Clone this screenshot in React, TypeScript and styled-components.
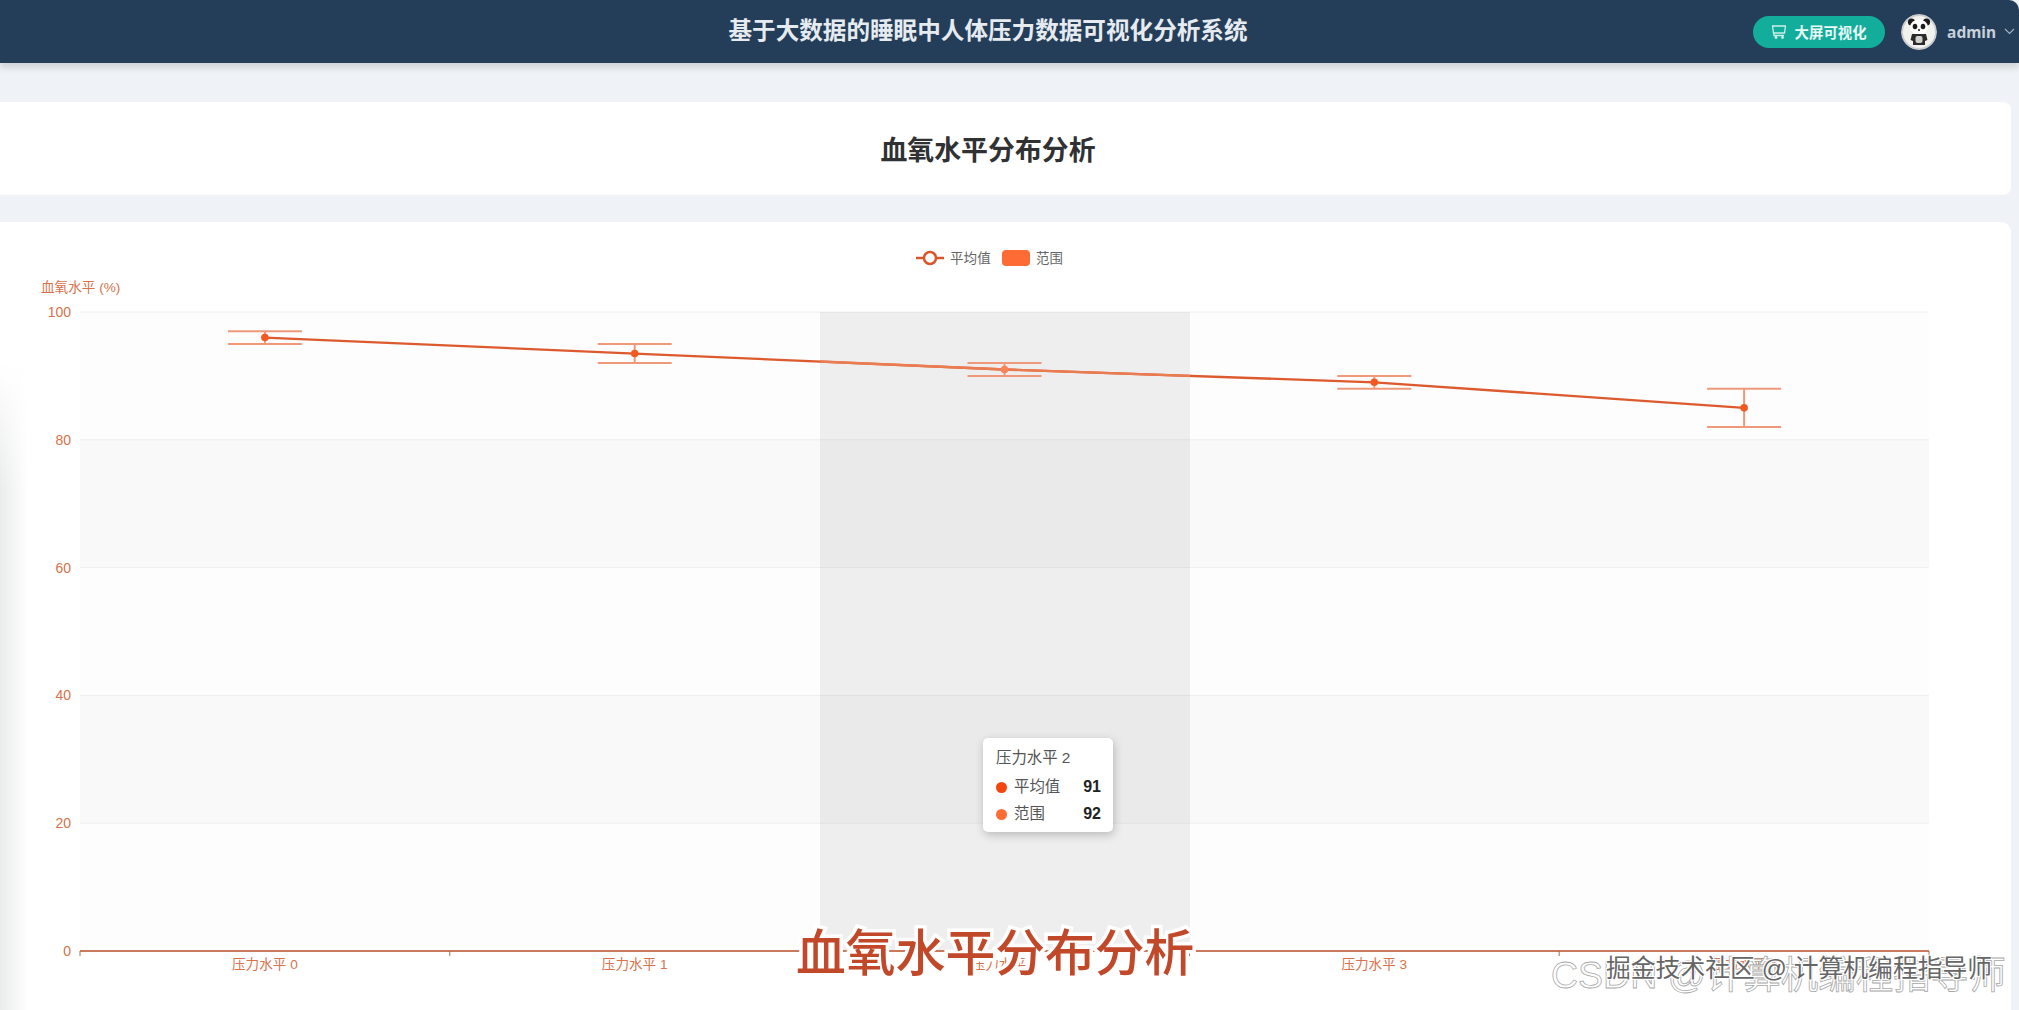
import React from "react";
import styled, { createGlobalStyle } from "styled-components";

const Global = createGlobalStyle`
  html, body { margin: 0; padding: 0; height: 100%; background: #eff2f6; overflow: hidden; }
  #root { height: 100%; }
`;

const CJK = `"Liberation Sans", "Noto Sans CJK SC", sans-serif`;

const Page = styled.div`
  width: 2019px; height: 1010px; display: flex; flex-direction: column;
  font-family: ${CJK}; background: #eff2f6; position: relative; overflow: hidden;
`;
const TopBar = styled.header`
  height: 63px; flex: none; background: #243e5a; border-top-right-radius: 10px;
  display: grid; grid-template-columns: 1fr auto; align-items: center;
  box-shadow: 0 5px 6px rgba(0, 0, 0, 0.12); position: relative; z-index: 2;
`;
const SystemTitle = styled.h1`
  margin: 0 0 0 476px; width: 1024px; text-align: center; font-size: 23.6px; line-height: 63px;
  font-weight: 700; color: #e6ebf0; white-space: nowrap;
`;
const TopActions = styled.div`
  display: flex; align-items: center; padding-right: 4px;
`;
const ScreenButton = styled.button`
  width: 132px; height: 32px; border: 0; border-radius: 16px; background: #12ad9b; color: #eafaf7;
  display: flex; align-items: center; justify-content: center; gap: 9px; padding: 0;
  font: 700 14.4px ${CJK};
`;
const AvatarRing = styled.div`
  width: 36px; height: 36px; margin-left: 16px; border-radius: 50%; overflow: hidden; flex: none;
`;
const UserName = styled.span`
  margin-left: 10px; font-size: 15.5px; font-weight: 700; color: #c6d1dc; font-family: "Noto Sans", sans-serif;
`;
const Caret = styled.svg`
  width: 11px; height: 7px; margin-left: 8px; fill: none; stroke: #9fb0c1; stroke-width: 1.2;
`;
const Main = styled.main`
  flex: 1; min-height: 0; display: flex; flex-direction: column; gap: 27px; padding: 39px 8px 0 0;
`;
const TitleCard = styled.section`
  height: 93px; flex: none; box-sizing: border-box; padding-right: 35px; background: #fff;
  border-radius: 0 8px 8px 0; display: flex; align-items: center; justify-content: center;
`;
const PageTitle = styled.h2`
  margin: 0; font-size: 26.9px; font-weight: 700; color: #303133;
`;
const ChartCard = styled.section`
  flex: 1; min-height: 0; background: #fff; border-radius: 0 10px 0 0; position: relative; overflow: hidden;
`;
const ChartSvg = styled.svg`
  display: block; width: 2011px; height: 788px; font-family: ${CJK};
`;
const LeftShade = styled.div`
  position: absolute; left: 0; top: 140px; bottom: 0; width: 28px;
  background: linear-gradient(90deg, rgba(232, 233, 234, 0.9), rgba(255, 255, 255, 0));
  mask-image: linear-gradient(180deg, transparent, #000 130px);
`;
const Tooltip = styled.div`
  position: absolute; left: 983px; top: 516px; width: 130px; height: 94px; box-sizing: border-box;
  background: #fff; border-radius: 5px; box-shadow: 1px 3px 10px rgba(0, 0, 0, 0.22);
  padding: 10px 12px 0 13px; color: #555; font-size: 15.4px; line-height: 20px;
`;
const TipHead = styled.div`
  margin-bottom: 6px; white-space: nowrap;
`;
const TipRow = styled.div`
  display: flex; align-items: center; height: 28px; margin-top: -1px;
`;
const TipDot = styled.i<{ $c: string }>`
  width: 11px; height: 11px; border-radius: 50%; background: ${p => p.$c}; margin-right: 7px;
`;
const TipValue = styled.b`
  margin-left: auto; color: #222; font-size: 16px;
`;
const Stamp = styled.div`
  position: absolute; left: 796px; top: 702px; font-size: 49.8px; line-height: 60px; font-weight: 500; color: #c2482a;
  white-space: nowrap; -webkit-text-stroke: 7px #fff; paint-order: stroke fill;
`;
const CsdnMark = styled.div`
  position: absolute; left: 1551px; top: 728px; font-size: 37.5px; line-height: 50px; font-weight: 400; color: #fff;
  white-space: nowrap; -webkit-text-stroke: 0.8px #a8a8a8;
`;
const JuejinMark = styled.div`
  position: absolute; left: 1606px; top: 729px; font-size: 24.8px; line-height: 36px; color: #666;
  white-space: nowrap; text-shadow: 1px 1px 0 #fff, -1px -1px 0 #fff, 1px -1px 0 #fff, -1px 1px 0 #fff;
`;

const L = 80, R = 1929, Y0 = 951, U = 6.39;
const y = (v: number) => Y0 - v * U;
const step = (R - L) / 5;
const cx = (i: number) => L + step * i + step / 2;
const data = [
  { v: 96, lo: 95, hi: 97 },
  { v: 93.5, lo: 92, hi: 95 },
  { v: 91, lo: 90, hi: 92 },
  { v: 89, lo: 88, hi: 90 },
  { v: 85, lo: 82, hi: 88 },
];
const AXIS = "#d8724c";

function Panda() {
  return (
    <svg viewBox="0 0 36 36" width="36" height="36">
      <circle cx="18" cy="18" r="18" fill="#c9cbcc" />
      <circle cx="18" cy="18" r="16" fill="#f1f1ee" />
      <circle cx="10.500" cy="8" r="3.600" fill="#1c1c1c" />
      <circle cx="25.500" cy="8" r="3.600" fill="#1c1c1c" />
      <ellipse cx="18" cy="13" rx="9" ry="7.600" fill="#fff" />
      <ellipse cx="14" cy="12.500" rx="2.300" ry="2.800" fill="#1c1c1c" />
      <ellipse cx="22" cy="12.500" rx="2.300" ry="2.800" fill="#1c1c1c" />
      <ellipse cx="18" cy="16" rx="1.200" ry="0.900" fill="#333" />
      <path d="M11 20h14l1.500 6-2.500 1v4h-12v-4l-2.500-1z" fill="#2b2b2b" />
      <rect x="14.500" y="22" width="7" height="7" rx="2" fill="#cfcfcb" />
    </svg>
  );
}

function Chart() {
  const bands = [0, 1, 2, 3, 4];
  return (
    <ChartSvg viewBox="0 222 2011 788">
      {bands.map(i => (
        <rect key={i} x={L} y={y(100 - i * 20)} width={R - L} height={20 * U} fill={i % 2 ? "#f9f9f9" : "#fdfdfd"} />
      ))}
      {bands.map(i => (
        <line key={i} x1={L} x2={R} y1={y(100 - i * 20)} y2={y(100 - i * 20)} stroke="#eeeeee" />
      ))}
      <rect x={820} y={312} width={370} height={639} fill="rgba(120,120,120,0.11)" />
      {[100, 80, 60, 40, 20, 0].map(v => (
        <text key={v} x={71} y={y(v) + 5} textAnchor="end" fontSize="14" fill={AXIS}>{v}</text>
      ))}
      <text x={41} y={292} fontSize="13.600" fill={AXIS}>血氧水平 (%)</text>

      <line x1={916} x2={944} y1={258} y2={258} stroke="#d9562b" strokeWidth="2.500" />
      <circle cx={930} cy={258} r={6} fill="#fff" stroke="#d9562b" strokeWidth="2.500" />
      <text x={950} y={262.500} fontSize="13.600" fill="#666">平均值</text>
      <rect x={1002} y={250} width={28} height={16} rx={4} fill="#ff6b35" />
      <text x={1036} y={262.500} fontSize="13.400" fill="#666">范围</text>

      <line x1={L} x2={R} y1={Y0} y2={Y0} stroke="#c9795c" strokeWidth="2" />
      {[0, 1, 2, 3, 4, 5].map(i => (
        <line key={i} x1={L + step * i} x2={L + step * i} y1={Y0} y2={Y0 + 5} stroke="#b5694f" />
      ))}
      {data.map((_, i) => (
        <text key={i} x={cx(i)} y={969} textAnchor="middle" fontSize="13.600" fill={AXIS}>压力水平 {i}</text>
      ))}

      {data.map((d, i) => (
        <g key={i} stroke="#f0987a" strokeWidth="2">
          <line x1={cx(i) - 37} x2={cx(i) + 37} y1={y(d.hi)} y2={y(d.hi)} />
          <line x1={cx(i) - 37} x2={cx(i) + 37} y1={y(d.lo)} y2={y(d.lo)} />
          <line x1={cx(i)} x2={cx(i)} y1={y(d.hi)} y2={y(d.lo)} />
        </g>
      ))}
      <polyline
        points={data.map((d, i) => `${cx(i)},${y(d.v)}`).join(" ")}
        fill="none" stroke="#dc5a2e" strokeWidth="2.300"
      />
      <polyline points="820,361.500 1004.600,369.500 1190,375.900" fill="none" stroke="#ea7c52" strokeWidth="2.300" />
      {data.map((d, i) => (
        <circle key={i} cx={cx(i)} cy={y(d.v)} r={3.800} fill={i === 2 ? "#f6855a" : "#f4581f"} />
      ))}
    </ChartSvg>
  );
}

export default function App() {
  return (
    <Page>
      <Global />
      <TopBar>
        <SystemTitle>基于大数据的睡眠中人体压力数据可视化分析系统</SystemTitle>
        <TopActions>
          <ScreenButton>
            <svg width="14" height="14" viewBox="0 0 14 14" fill="none" stroke="#cdeee9" strokeWidth="1.300">
              <path d="M0.500 1h13l-1 7h-11z" />
              <path d="M2 8v2.500h10" />
              <circle cx="4" cy="12.500" r="0.800" />
              <circle cx="10.500" cy="12.500" r="0.800" />
            </svg>
            大屏可视化
          </ScreenButton>
          <AvatarRing><Panda /></AvatarRing>
          <UserName>admin</UserName>
          <Caret viewBox="0 0 11 7"><path d="M1 1l4.500 4.500L10 1" /></Caret>
        </TopActions>
      </TopBar>
      <Main>
        <TitleCard>
          <PageTitle>血氧水平分布分析</PageTitle>
        </TitleCard>
        <ChartCard>
          <Chart />
          <LeftShade />
          <Tooltip>
            <TipHead>压力水平 2</TipHead>
            <TipRow><TipDot $c="#f4450f" />平均值<TipValue>91</TipValue></TipRow>
            <TipRow><TipDot $c="#ff6b35" />范围<TipValue>92</TipValue></TipRow>
          </Tooltip>
          <Stamp>血氧水平分布分析</Stamp>
          <CsdnMark>CSDN @计算机编程指导师</CsdnMark>
          <JuejinMark>掘金技术社区 @ 计算机编程指导师</JuejinMark>
        </ChartCard>
      </Main>
    </Page>
  );
}
